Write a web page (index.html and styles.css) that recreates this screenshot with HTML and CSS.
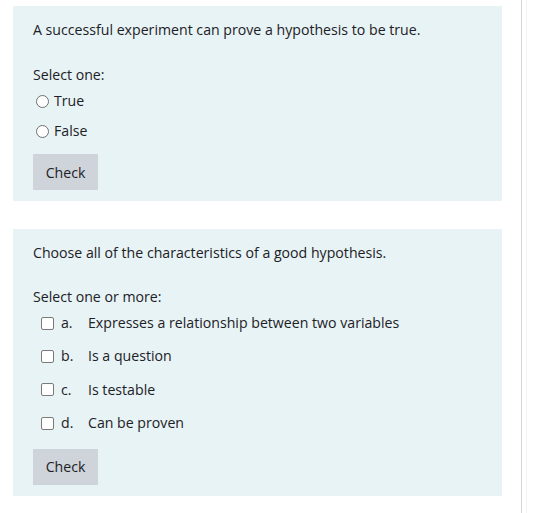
FILE: index.html
```html
<!DOCTYPE html>
<html lang="en">
<head>
<meta charset="utf-8">
<title>Quiz</title>
<link rel="stylesheet" href="styles.css">
</head>
<body>
<div class="page">
  <main class="main">
    <section class="card">
      <div class="qtext">A successful experiment can prove a hypothesis to be true.</div>
      <div class="prompt">Select one:</div>
      <div class="answers radios">
        <label class="opt"><span class="radio"></span><span class="otext">True</span></label>
        <label class="opt"><span class="radio"></span><span class="otext">False</span></label>
      </div>
      <div class="actions"><button class="btn" type="button">Check</button></div>
    </section>
    <section class="card">
      <div class="qtext">Choose all of the characteristics of a good hypothesis.</div>
      <div class="prompt">Select one or more:</div>
      <div class="answers checks">
        <label class="opt copt"><span class="check"></span><span class="letter">a.</span><span class="otext">Expresses a relationship between two variables</span></label>
        <label class="opt copt"><span class="check"></span><span class="letter">b.</span><span class="otext">Is a question</span></label>
        <label class="opt copt"><span class="check"></span><span class="letter">c.</span><span class="otext">Is testable</span></label>
        <label class="opt copt"><span class="check"></span><span class="letter">d.</span><span class="otext">Can be proven</span></label>
      </div>
      <div class="actions actions2"><button class="btn" type="button">Check</button></div>
    </section>
  </main>
  <div class="rail"></div>
</div>
</body>
</html>
```
FILE: styles.css
```css
html, body {
  margin: 0;
  padding: 0;
  background: #ffffff;
}
body {
  font-family: "Open Sans", "Noto Sans", sans-serif;
  font-size: 14.15px;
  color: #1d2125;
  width: 541px;
  height: 513px;
  overflow: hidden;
}
.page {
  display: flex;
  height: 513px;
}
.main {
  width: 522px;
  box-sizing: border-box;
  border-right: 1px solid #d9d9d9;
  padding: 6px 0 0 13px;
  display: flex;
  flex-direction: column;
  gap: 28px;
}
.rail {
  width: 1px;
  margin-left: 4px;
  background: #f3f3f3;
}
.card {
  width: 489px;
  box-sizing: border-box;
  background: #e7f3f5;
  padding: 12px 20px 11px 20px;
  display: flex;
  flex-direction: column;
}
.qtext {
  line-height: 24px;
  height: 24px;
}
.prompt {
  margin-top: 21px;
  line-height: 24px;
  height: 24px;
}
.card + .card .prompt {
  margin-top: 20px;
}
.answers {
  display: flex;
  flex-direction: column;
}
.radios {
  gap: 2px;
}
.checks {
  gap: 5.4px;
}
.opt {
  display: flex;
  align-items: center;
  height: 28px;
  line-height: 28px;
}
.radio {
  width: 11px;
  height: 11px;
  border: 1px solid #707070;
  border-radius: 50%;
  background: #ffffff;
  margin-left: 3px;
  margin-right: 5px;
  flex: none;
}
.check {
  width: 11px;
  height: 11px;
  border: 1px solid #7a7a7a;
  border-radius: 2px;
  background: #ffffff;
  margin-left: 8px;
  margin-right: 7px;
  flex: none;
}
.letter {
  width: 27px;
  flex: none;
}
.actions {
  margin-top: 9px;
}
.actions2 {
  margin-top: 11.5px;
}
.btn {
  font: inherit;
  color: #1d2125;
  background: #ced4da;
  border: none;
  border-radius: 0;
  width: 65px;
  height: 36px;
  padding: 0;
  display: block;
}
```
